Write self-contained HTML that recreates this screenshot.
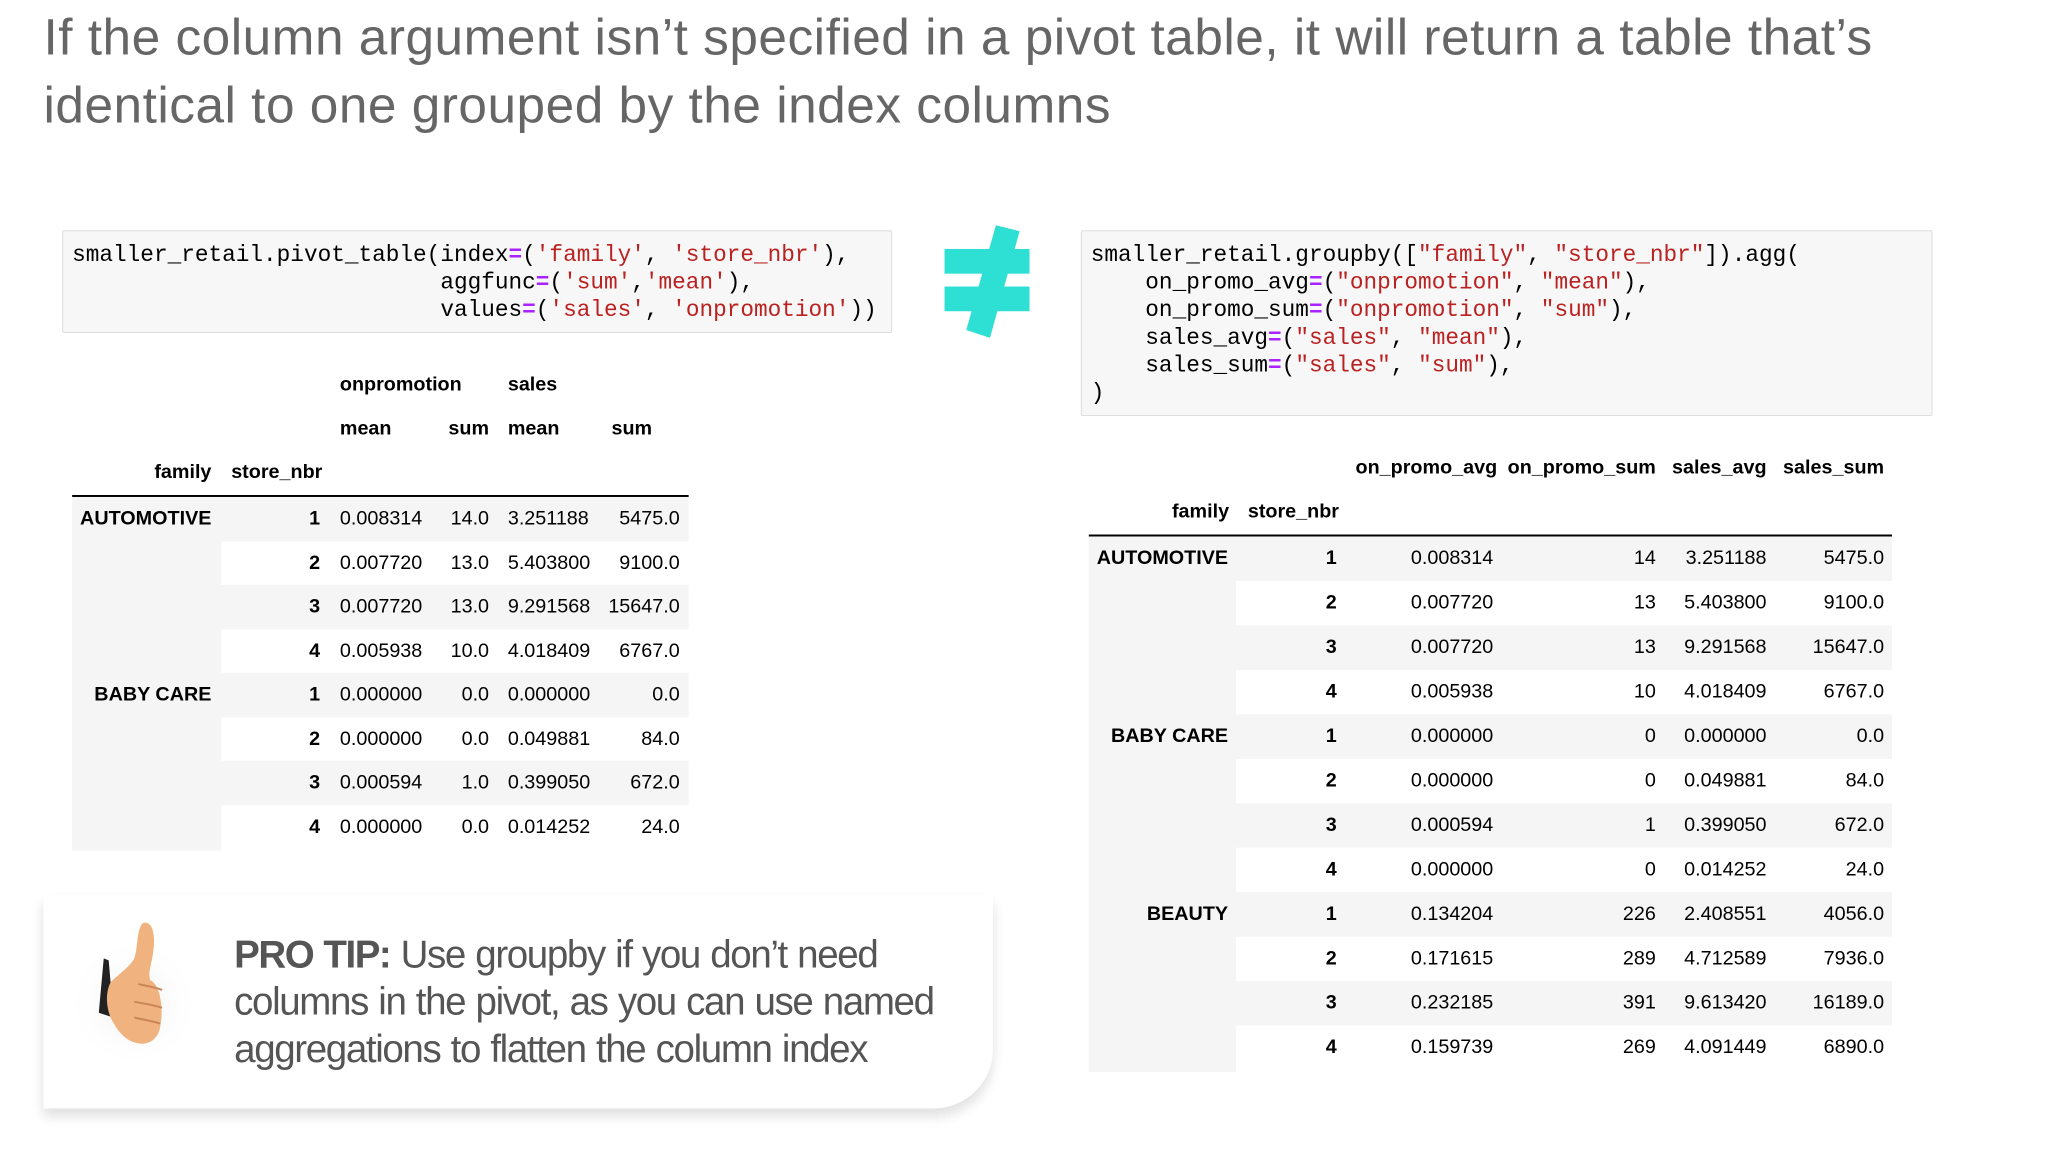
<!DOCTYPE html>
<html><head><meta charset="utf-8"><style>
*{margin:0;padding:0;box-sizing:border-box}
body{width:2050px;height:1150px;background:#fff;position:relative;overflow:hidden;font-family:"Liberation Sans",sans-serif}
#w{position:absolute;left:0;top:0;width:2075px;height:1164px;transform:scale(0.988);transform-origin:0 0}
.title{position:absolute;left:44px;top:4px;font-size:52px;line-height:69px;color:#666;letter-spacing:0.5px;white-space:nowrap}
.code{position:absolute;background:#f7f7f7;border:1px solid #ddd;border-radius:2px;font-family:"Liberation Mono",monospace;font-size:23px;line-height:28px;color:#000;white-space:pre;padding:10px 9px}
.s{color:#ba2121}.o{color:#aa22ff;font-weight:bold}
.t{position:absolute;font-size:20px;color:#000}
.c{position:absolute;white-space:nowrap}
.b{font-weight:bold}
.g{position:absolute;background:#f5f5f5}
.tip{position:absolute;left:44px;top:906px;width:961px;height:216px;background:#fff;border-bottom-right-radius:60px;box-shadow:0 8px 12px rgba(0,0,0,0.12)}
.tiptext{position:absolute;left:237px;top:943px;font-size:39px;line-height:48px;color:#555;letter-spacing:-1.4px;word-spacing:1px}
</style></head><body><div id="w">
<div class="title">If the column argument isn’t specified in a pivot table, it will return a table that’s<br>identical to one grouped by the index columns</div>

<div class="code" style="left:63px;top:233px;width:840px;height:104px">smaller_retail.pivot_table(index<span class="o">=</span>(<span class="s">'family'</span>, <span class="s">'store_nbr'</span>),
                           aggfunc<span class="o">=</span>(<span class="s">'sum'</span>,<span class="s">'mean'</span>),
                           values<span class="o">=</span>(<span class="s">'sales'</span>, <span class="s">'onpromotion'</span>))</div>

<svg style="position:absolute;left:952px;top:226px" width="94" height="118" viewBox="0 0 94 118">
<polygon points="56,2 80,8 50,116 26,108" fill="#2ee0d3"/>
<rect x="4" y="26" width="86" height="25" fill="#2ee0d3"/>
<rect x="4" y="64" width="86" height="25" fill="#2ee0d3"/>
</svg>

<div class="code" style="left:1094px;top:233px;width:862px;height:188px">smaller_retail.groupby([<span class="s">"family"</span>, <span class="s">"store_nbr"</span>]).agg(
    on_promo_avg<span class="o">=</span>(<span class="s">"onpromotion"</span>, <span class="s">"mean"</span>),
    on_promo_sum<span class="o">=</span>(<span class="s">"onpromotion"</span>, <span class="s">"sum"</span>),
    sales_avg<span class="o">=</span>(<span class="s">"sales"</span>, <span class="s">"mean"</span>),
    sales_sum<span class="o">=</span>(<span class="s">"sales"</span>, <span class="s">"sum"</span>),
)</div>

<div id="lt"></div>
<div id="rt"></div>

<div class="tip"></div>
<svg style="position:absolute;left:70px;top:930px" width="130" height="145" viewBox="0 0 130 145">
<defs><radialGradient id="sh" cx="50%" cy="55%" r="55%"><stop offset="0" stop-color="#eee"/><stop offset="1" stop-color="#fff" stop-opacity="0"/></radialGradient></defs>
<ellipse cx="65" cy="80" rx="62" ry="62" fill="url(#sh)"/>
<path d="M35 40 L30 95 L45 100 L40 42 Z" fill="#222"/>
<path d="M75 4 C86 2 88 20 84 40 C82 50 80 56 82 62 C92 66 96 90 92 110 C90 122 80 128 70 126 C56 124 48 112 42 100 C38 90 36 76 42 64 C50 56 60 50 66 40 C70 28 68 10 75 4 Z" fill="#f0b27f"/>
<path d="M70 66 C80 68 90 70 94 72 M66 84 C78 86 88 88 94 90 M66 100 C76 102 86 104 92 106" stroke="#c98558" stroke-width="2" fill="none"/>
</svg>
<div class="tiptext"><b style="color:#555;letter-spacing:-1.5px">PRO TIP:</b> Use groupby if you don’t need<br>columns in the pivot, as you can use named<br>aggregations to flatten the column index</div>
</div>
<script>
var W=document.getElementById('w');
function cell(par,x,y,w,txt,cls,align){
  var d=document.createElement('div');d.className='t c '+(cls||'');
  d.style.left=x+'px';d.style.top=y+'px';d.style.width=w+'px';d.style.textAlign=align||'left';d.textContent=txt;par.appendChild(d);
}
function bg(par,x,y,w,h){var d=document.createElement('div');d.className='g';d.style.left=x+'px';d.style.top=y+'px';d.style.width=w+'px';d.style.height=h+'px';par.appendChild(d);}
function line(par,x,y,w){var d=document.createElement('div');d.style.cssText='position:absolute;left:'+x+'px;top:'+y+'px;width:'+w+'px;height:2px;background:#000';par.appendChild(d);}
var L=document.getElementById('lt');
var ly0=503,lh=44.5;
bg(L,73,ly0,151,lh*8+2);
for(var i=0;i<8;i++){ if(i%2==0) bg(L,224,ly0+i*lh,473,lh); }
line(L,73,501,624);
cell(L,344,378,200,'onpromotion','b');cell(L,514,378,100,'sales','b');
cell(L,344,423,100,'mean','b');cell(L,430,423,65,'sum','b','right');cell(L,514,423,100,'mean','b');cell(L,600,423,60,'sum','b','right');
cell(L,100,467,114,'family','b','right');cell(L,234,467,100,'store_nbr','b');
var ld=[['AUTOMOTIVE',1,'0.008314','14.0','3.251188','5475.0'],['',2,'0.007720','13.0','5.403800','9100.0'],['',3,'0.007720','13.0','9.291568','15647.0'],['',4,'0.005938','10.0','4.018409','6767.0'],['BABY CARE',1,'0.000000','0.0','0.000000','0.0'],['',2,'0.000000','0.0','0.049881','84.0'],['',3,'0.000594','1.0','0.399050','672.0'],['',4,'0.000000','0.0','0.014252','24.0']];
ld.forEach(function(r,i){var y=ly0+i*lh+11;
 if(r[0])cell(L,73,y,141,r[0],'b','right');
 cell(L,250,y,74,String(r[1]),'b','right');
 cell(L,344,y,100,r[2]);cell(L,440,y,55,r[3],'','right');cell(L,514,y,100,r[4]);cell(L,600,y,88,r[5],'','right');});
var R=document.getElementById('rt');
var ry0=543,rh=45;
bg(R,1102,ry0,149,rh*12+2);
for(var i=0;i<12;i++){ if(i%2==0) bg(R,1251,ry0+i*rh,664,rh); }
line(R,1102,541,813);
cell(R,1372,462,140,'on_promo_avg','b');cell(R,1520,462,156,'on_promo_sum','b','right');cell(R,1690,462,98,'sales_avg','b','right');cell(R,1800,462,107,'sales_sum','b','right');
cell(R,1130,507,114,'family','b','right');cell(R,1263,507,110,'store_nbr','b');
var rd=[['AUTOMOTIVE',1,'0.008314','14','3.251188','5475.0'],['',2,'0.007720','13','5.403800','9100.0'],['',3,'0.007720','13','9.291568','15647.0'],['',4,'0.005938','10','4.018409','6767.0'],['BABY CARE',1,'0.000000','0','0.000000','0.0'],['',2,'0.000000','0','0.049881','84.0'],['',3,'0.000594','1','0.399050','672.0'],['',4,'0.000000','0','0.014252','24.0'],['BEAUTY',1,'0.134204','226','2.408551','4056.0'],['',2,'0.171615','289','4.712589','7936.0'],['',3,'0.232185','391','9.613420','16189.0'],['',4,'0.159739','269','4.091449','6890.0']];
rd.forEach(function(r,i){var y=ry0+i*rh+11;
 if(r[0])cell(R,1102,y,141,r[0],'b','right');
 cell(R,1300,y,53,String(r[1]),'b','right');
 cell(R,1428,y,100,r[2]);cell(R,1576,y,100,r[3],'','right');cell(R,1688,y,100,r[4],'','right');cell(R,1800,y,107,r[5],'','right');});
</script>
</body></html>
